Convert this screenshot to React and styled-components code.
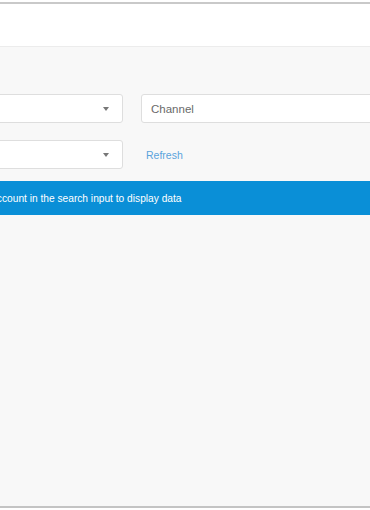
import styled, { createGlobalStyle } from 'styled-components'

const Global = createGlobalStyle`
    html, body {
        margin: 0;
        padding: 0;
        background: #ffffff;
        font-family: "Liberation Sans", Arial, sans-serif;
    }
`

const Frame = styled.div`
    width: 370px;
    height: 510px;
    overflow: hidden;
    display: flex;
    flex-direction: column;
    padding-top: 2px;
    box-sizing: border-box;
`

const Window = styled.div`
    flex: 1;
    display: flex;
    flex-direction: column;
    border-top: 2px solid #c9c9c9;
    border-bottom: 2px solid #c4c4c4;
    margin-bottom: 2px;
    margin-left: -100px;
    width: 600px;
`

const Header = styled.div`
    height: 42px;
    background: #ffffff;
    border-bottom: 1px solid #ececec;
`

const Content = styled.div`
    flex: 1;
    background: #f8f8f8;
    padding: 47px 0 0 0;
    display: flex;
    flex-direction: column;
`

const Row = styled.div`
    display: flex;
    align-items: center;
    gap: 18px;
    padding: 0 15px;
    margin-bottom: ${p => p.$mb || 0}px;
`

const Select = styled.div`
    width: 208px;
    height: 29px;
    box-sizing: border-box;
    background: #ffffff;
    border: 1px solid #dedede;
    border-radius: 3px;
    display: flex;
    align-items: center;
    justify-content: flex-end;
    padding-right: 13px;
`

const Caret = styled.span`
    width: 0;
    height: 0;
    border-left: 3.5px solid transparent;
    border-right: 3.5px solid transparent;
    border-top: 4px solid #777;
`

const Input = styled.div`
    flex: 1;
    height: 29px;
    box-sizing: border-box;
    background: #ffffff;
    border: 1px solid #dedede;
    border-radius: 3px;
    display: flex;
    align-items: center;
    padding-left: 9px;
    font-size: 11.5px;
    color: #6a6a6a;
`

const Link = styled.span`
    font-size: 10.5px;
    color: #5aa3dc;
    margin-left: 5px;
`

const Banner = styled.div`
    height: 34px;
    background: #0a8fd7;
    color: #ffffff;
    font-size: 10.2px;
    display: flex;
    align-items: center;
    padding-left: 17px;
`

export default function App() {
    return (
        <Frame>
            <Global />
            <Window>
                <Header />
                <Content>
                    <Row $mb={17}>
                        <Select><Caret /></Select>
                        <Input>Channel</Input>
                    </Row>
                    <Row $mb={12}>
                        <Select><Caret /></Select>
                        <Link>Refresh</Link>
                    </Row>
                    <Banner>Please enter an account in the search input to display data</Banner>
                </Content>
            </Window>
        </Frame>
    )
}
